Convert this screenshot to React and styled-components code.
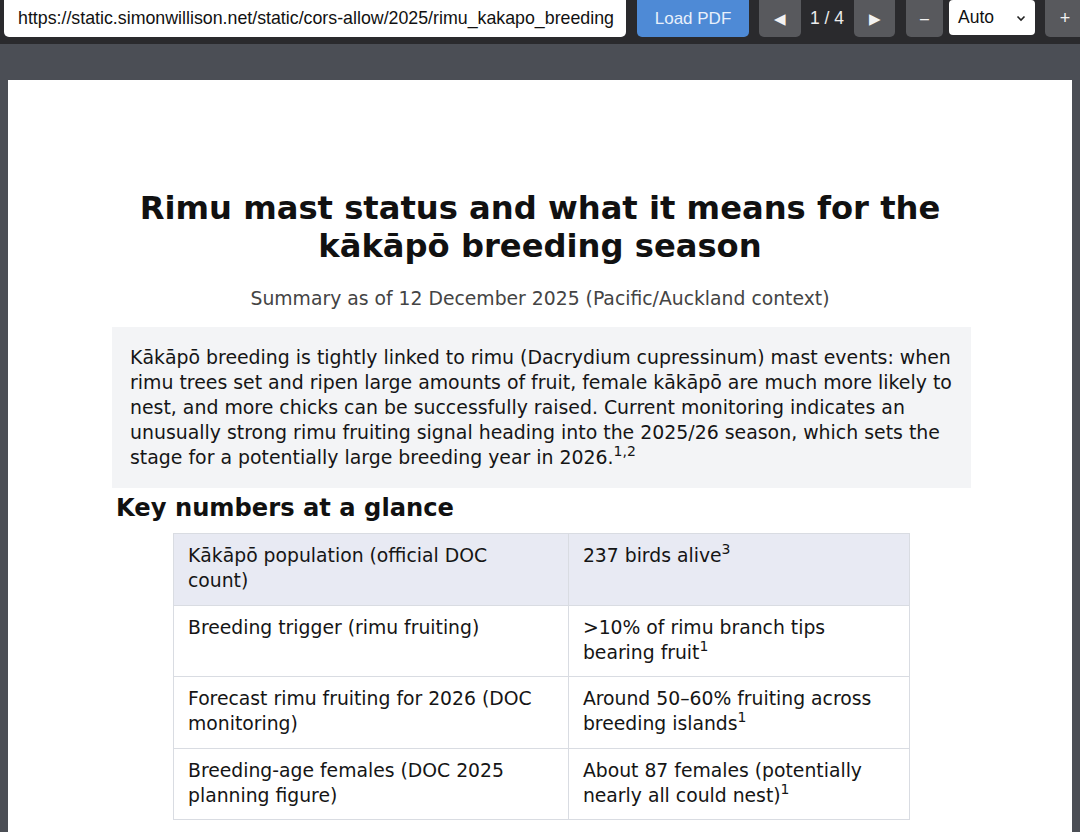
import React from "react";
import styled, { createGlobalStyle } from "styled-components";

const GlobalStyle = createGlobalStyle`
  html, body {
    margin: 0;
    padding: 0;
    height: 100%;
    overflow: hidden;
    background: #4b4e55;
  }
`;

const Toolbar = styled.div`
  display: flex;
  align-items: flex-start;
  height: 44px;
  padding: 0 0 0 4px;
  background: #2a2a2d;
  font-family: "Liberation Sans", Arial, sans-serif;
  font-size: 15px;
  box-sizing: border-box;
  overflow: hidden;
`;

const UrlInput = styled.div`
  width: 622px;
  height: 37px;
  flex: none;
  box-sizing: border-box;
  padding: 0 8px 0 14px;
  display: flex;
  align-items: center;
  background: #fff;
  color: #111;
  border-radius: 0 0 5px 5px;
  white-space: nowrap;
  overflow: hidden;
  font-size: 17.8px;
`;

const Button = styled.div`
  height: 37px;
  width: ${(p) => p.$w}px;
  flex: none;
  display: flex;
  align-items: center;
  justify-content: center;
  box-sizing: border-box;
  border-radius: 0 0 5px 5px;
  background: ${(p) => (p.$primary ? "#4e8ad6" : "#58595d")};
  color: ${(p) => (p.$primary ? "#e8f0fb" : "#f2f2f2")};
  font-size: ${(p) => p.$fs || 17}px;
  margin-left: ${(p) => p.$ml}px;
`;

const PageCount = styled.div`
  height: 37px;
  width: 32px;
  flex: none;
  margin-left: 10px;
  display: flex;
  align-items: center;
  justify-content: center;
  color: #ececec;
  font-size: 17.5px;
  white-space: nowrap;
`;

const Select = styled.div`
  width: 86px;
  height: 35px;
  box-sizing: border-box;
  flex: none;
  display: flex;
  align-items: center;
  justify-content: space-between;
  padding: 0 8px 0 9px;
  margin-left: 6px;
  background: #fff;
  border-radius: 4px;
  color: #111;
  font-size: 17.5px;
`;

const Viewer = styled.div`
  height: calc(100vh - 44px);
  padding: 36px 8px 0;
  box-sizing: border-box;
  background: #4b4e55;
  overflow: hidden;
`;

const Page = styled.div`
  width: 1064px;
  min-height: 900px;
  background: #fff;
  box-sizing: border-box;
  padding: 109px 0 0;
  font-family: "DejaVu Sans", sans-serif;
  color: #111;
`;

const Title = styled.h1`
  margin: 0 auto;
  width: 900px;
  text-align: center;
  font-size: 32.2px;
  line-height: 38px;
  font-weight: bold;
`;

const Subtitle = styled.div`
  margin-top: 23px;
  text-align: center;
  font-size: 18.8px;
  line-height: 22px;
  color: #444;
`;

const Summary = styled.div`
  margin: 17px 0 0 104px;
  width: 859px;
  box-sizing: border-box;
  padding: 18px;
  background: #f3f4f6;
  font-size: 18.9px;
  line-height: 25px;
  color: #151515;
`;

const Line = styled.span`
  display: block;
  white-space: nowrap;
`;

const Sup = styled.sup`
  font-size: 14px;
  line-height: 0;
  vertical-align: 8px;
`;

const Heading = styled.h2`
  margin: 6px 0 0 108px;
  font-size: 24.2px;
  line-height: 28px;
  font-weight: bold;
`;

const Table = styled.table`
  margin: 11px 0 0 165px;
  width: 737px;
  border-collapse: collapse;
  font-size: 18.8px;
  line-height: 25px;
  color: #151515;
`;

const Row = styled.tr`
  background: ${(p) => (p.$head ? "#e8eaf3" : "#fff")};
`;

const Cell = styled.td`
  border: 1px solid #d9dce2;
  padding: 9px 14px 11.5px;
  vertical-align: top;
  width: ${(p) => p.$w}px;
  height: 50px;
`;

const rows = [
  [["Kākāpō population (official DOC", "count)"], ["237 birds alive"], "3"],
  [["Breeding trigger (rimu fruiting)"], [">10% of rimu branch tips", "bearing fruit"], "1"],
  [["Forecast rimu fruiting for 2026 (DOC", "monitoring)"], ["Around 50–60% fruiting across", "breeding islands"], "1"],
  [["Breeding-age females (DOC 2025", "planning figure)"], ["About 87 females (potentially", "nearly all could nest)"], "1"],
];

const summary = [
  "Kākāpō breeding is tightly linked to rimu (Dacrydium cupressinum) mast events: when",
  "rimu trees set and ripen large amounts of fruit, female kākāpō are much more likely to",
  "nest, and more chicks can be successfully raised. Current monitoring indicates an",
  "unusually strong rimu fruiting signal heading into the 2025/26 season, which sets the",
];

export default function App() {
  return (
    <>
      <GlobalStyle />
      <Toolbar>
        <UrlInput>https://static.simonwillison.net/static/cors-allow/2025/rimu_kakapo_breeding</UrlInput>
        <Button $primary $w={112} $ml={11}>Load PDF</Button>
        <Button $w={42} $ml={10} $fs={15}>◀</Button>
        <PageCount>1 / 4</PageCount>
        <Button $w={41} $ml={11} $fs={15}>▶</Button>
        <Button $w={37} $ml={11} $fs={16}>–</Button>
        <Select>
          <span>Auto</span>
          <svg width="12" height="12" viewBox="0 0 12 12">
            <path d="M2.5 4.5 L6 8 L9.5 4.5" fill="none" stroke="#222" strokeWidth="1.6" />
          </svg>
        </Select>
        <Button $w={40} $ml={10} $fs={18}>+</Button>
      </Toolbar>
      <Viewer>
        <Page>
          <Title>Rimu mast status and what it means for the kākāpō breeding season</Title>
          <Subtitle>Summary as of 12 December 2025 (Pacific/Auckland context)</Subtitle>
          <Summary>
            {summary.map((l) => (
              <Line key={l}>{l}</Line>
            ))}
            <Line>
              stage for a potentially large breeding year in 2026.<Sup>1,2</Sup>
            </Line>
          </Summary>
          <Heading>Key numbers at a glance</Heading>
          <Table>
            <tbody>
              {rows.map(([k, v, n], i) => (
                <Row key={k[0]} $head={i === 0}>
                  <Cell $w={394}>
                    {k.map((l) => (
                      <Line key={l}>{l}</Line>
                    ))}
                  </Cell>
                  <Cell $w={342}>
                    {v.map((l, j) => (
                      <Line key={l}>
                        {l}
                        {j === v.length - 1 && <Sup>{n}</Sup>}
                      </Line>
                    ))}
                  </Cell>
                </Row>
              ))}
            </tbody>
          </Table>
        </Page>
      </Viewer>
    </>
  );
}
